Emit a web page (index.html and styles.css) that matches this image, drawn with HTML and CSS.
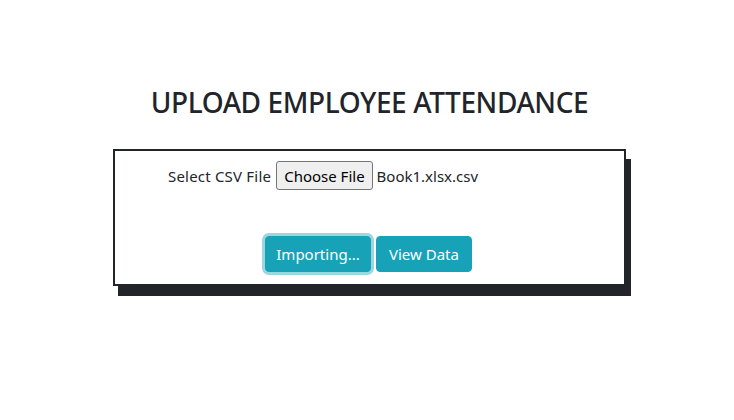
FILE: index.html
```html
<!DOCTYPE html>
<html>
<head>
<meta charset="utf-8">
<link rel="stylesheet" href="styles.css">
</head>
<body>
<div class="page">
  <h2 class="title">UPLOAD EMPLOYEE ATTENDANCE</h2>
  <form class="card">
    <div class="file-row">
      <span class="label">Select CSV File</span>
      <span class="file-btn">Choose File</span>
      <span class="file-name">Book1.xlsx.csv</span>
    </div>
    <div class="actions">
      <button type="button" class="btn btn-focus">Importing...</button>
      <button type="button" class="btn">View Data</button>
    </div>
  </form>
</div>
</body>
</html>
```

FILE: styles.css
```css
html, body {
  margin: 0;
  padding: 0;
  background: #fff;
}
body {
  font-family: "Noto Sans", "Open Sans", sans-serif;
  color: #212529;
  font-size: 15px;
  min-height: 420px;
}
.page {
  width: 513px;
  margin: 0 auto;
  padding: 84px 0 40px 5px;
  display: flex;
  flex-direction: column;
  align-items: center;
}
.title {
  margin: 0 0 28px;
  font-size: 28px;
  font-weight: 500;
  line-height: 37px;
  letter-spacing: -0.4px;
  white-space: nowrap;
}
.card {
  box-sizing: border-box;
  width: 513px;
  height: 137px;
  border: 2px solid #212529;
  box-shadow: 5px 10px 0 0 #212529;
  background: #fff;
  display: flex;
  flex-direction: column;
  align-items: stretch;
  padding: 10px 0 0 53px;
}
.file-row {
  display: flex;
  align-items: center;
  gap: 4px;
}
.label {
  letter-spacing: 0.2px;
  margin-right: 1px;
}
.label, .file-name {
  font-size: 15px;
  color: #212529;
}
.file-btn {
  box-sizing: border-box;
  height: 29px;
  padding: 0 7px;
  display: inline-flex;
  align-items: center;
  background: #efefef;
  border: 1px solid #767676;
  border-radius: 3px;
  font-size: 15px;
  color: #000;
}
.actions {
  margin-top: 46px;
  margin-left: 97px;
  display: flex;
  gap: 5px;
}
.btn {
  box-sizing: border-box;
  height: 36px;
  padding: 0 12px;
  background: #17a2b8;
  border: 1px solid #17a2b8;
  border-radius: 4px;
  color: #fff;
  font-family: inherit;
  font-size: 15px;
}
.btn-focus {
  width: 106px;
  padding: 0;
  box-shadow: 0 0 0 3px rgba(58, 176, 195, 0.5);
}
```
